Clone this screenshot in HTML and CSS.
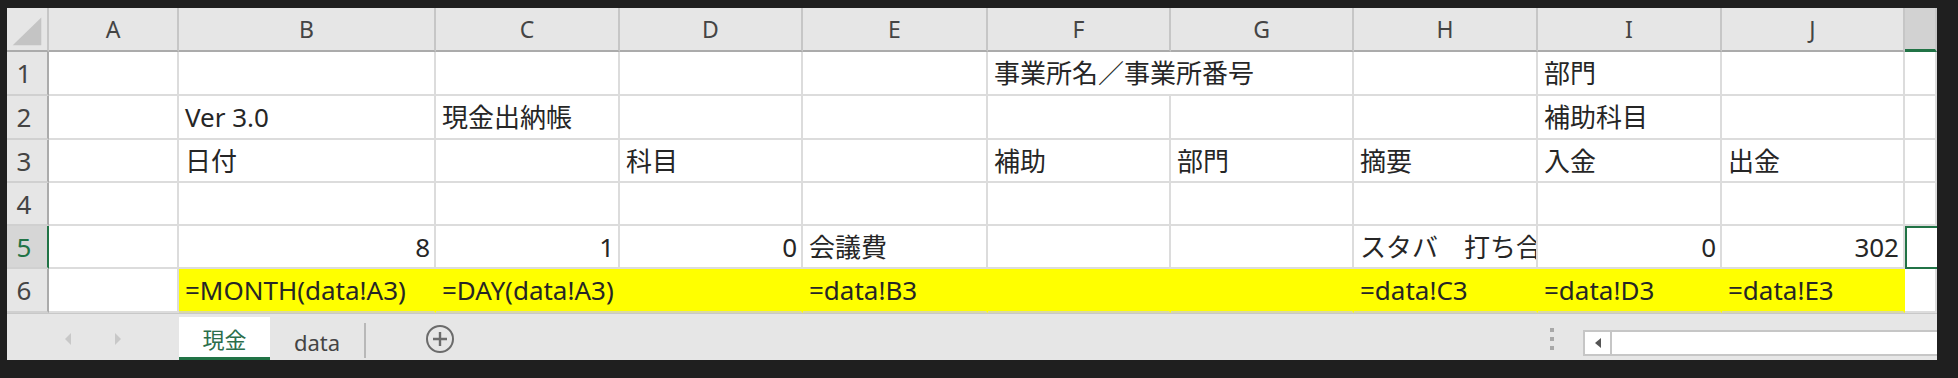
FILE: index.html
```html
<!DOCTYPE html>
<html>
<head>
  <meta charset="utf-8">
  <title>現金出納帳</title>
  <link rel="stylesheet" href="styles.css">
</head>
<body>
  <div class="window">
    <div class="sheet">
      <!-- column headers -->
      <div class="corner">
        <svg width="42" height="44" viewBox="0 0 42 44"><polygon points="6,39 36,39 36,10" fill="#c4c4c4"/></svg>
      </div>
      <div class="col-head">A</div>
      <div class="col-head">B</div>
      <div class="col-head">C</div>
      <div class="col-head">D</div>
      <div class="col-head">E</div>
      <div class="col-head">F</div>
      <div class="col-head">G</div>
      <div class="col-head">H</div>
      <div class="col-head">I</div>
      <div class="col-head">J</div>
      <div class="col-head current"></div>

      <!-- row 1 -->
      <div class="row-head">1</div>
      <div class="cell"></div>
      <div class="cell"></div>
      <div class="cell"></div>
      <div class="cell"></div>
      <div class="cell"></div>
      <div class="cell span2">事業所名／事業所番号</div>
      <div class="cell"></div>
      <div class="cell">部門</div>
      <div class="cell"></div>
      <div class="cell"></div>

      <!-- row 2 -->
      <div class="row-head">2</div>
      <div class="cell"></div>
      <div class="cell">Ver 3.0</div>
      <div class="cell">現金出納帳</div>
      <div class="cell"></div>
      <div class="cell"></div>
      <div class="cell"></div>
      <div class="cell"></div>
      <div class="cell"></div>
      <div class="cell">補助科目</div>
      <div class="cell"></div>
      <div class="cell"></div>

      <!-- row 3 -->
      <div class="row-head">3</div>
      <div class="cell"></div>
      <div class="cell">日付</div>
      <div class="cell"></div>
      <div class="cell">科目</div>
      <div class="cell"></div>
      <div class="cell">補助</div>
      <div class="cell">部門</div>
      <div class="cell">摘要</div>
      <div class="cell">入金</div>
      <div class="cell">出金</div>
      <div class="cell"></div>

      <!-- row 4 -->
      <div class="row-head">4</div>
      <div class="cell"></div>
      <div class="cell"></div>
      <div class="cell"></div>
      <div class="cell"></div>
      <div class="cell"></div>
      <div class="cell"></div>
      <div class="cell"></div>
      <div class="cell"></div>
      <div class="cell"></div>
      <div class="cell"></div>
      <div class="cell"></div>

      <!-- row 5 -->
      <div class="row-head current">5</div>
      <div class="cell"></div>
      <div class="cell num">8</div>
      <div class="cell num">1</div>
      <div class="cell num">0</div>
      <div class="cell">会議費</div>
      <div class="cell"></div>
      <div class="cell"></div>
      <div class="cell clip">スタバ　打ち合わせ</div>
      <div class="cell num">0</div>
      <div class="cell num">302</div>
      <div class="cell active"></div>

      <!-- row 6 -->
      <div class="row-head">6</div>
      <div class="cell"></div>
      <div class="cell fill">=MONTH(data!A3)</div>
      <div class="cell fill span2">=DAY(data!A3)</div>
      <div class="cell fill">=data!B3</div>
      <div class="cell fill"></div>
      <div class="cell fill"></div>
      <div class="cell fill">=data!C3</div>
      <div class="cell fill">=data!D3</div>
      <div class="cell fill">=data!E3</div>
      <div class="cell"></div>
    </div>

    <div class="tabbar">
      <div class="tab-nav">
        <svg width="12" height="16" viewBox="0 0 12 16"><polygon points="9,2 3,8 9,14" fill="#c8c8c8"/></svg>
        <svg width="12" height="16" viewBox="0 0 12 16"><polygon points="3,2 9,8 3,14" fill="#c8c8c8"/></svg>
      </div>
      <div class="tab selected">現金</div>
      <div class="tab">data</div>
      <div class="add-sheet">
        <svg width="30" height="30" viewBox="0 0 30 30">
          <circle cx="15" cy="15" r="13" fill="none" stroke="#6b6b6b" stroke-width="2"/>
          <path d="M15 8v14M8 15h14" stroke="#6b6b6b" stroke-width="2.4"/>
        </svg>
      </div>
      <div class="spacer"></div>
      <div class="grip">
        <span></span><span></span><span></span>
      </div>
      <div class="hscroll">
        <div class="scroll-btn">
          <svg width="10" height="14" viewBox="0 0 10 14"><polygon points="8,2 2,7 8,12" fill="#555"/></svg>
        </div>
        <div class="scroll-track"></div>
      </div>
    </div>
  </div>
</body>
</html>
```

FILE: styles.css
```css
body {
  margin: 0;
  background-color: #1f1f1f;
  font-family: "Noto Sans", "Noto Sans CJK JP", sans-serif;
  overflow: hidden;
}

.window {
  width: 1930px;
  margin: 8px 0 0 7px;
  background-color: #fff;
  overflow: hidden;
}

.sheet {
  display: grid;
  grid-template-columns: 42px 130px 257px 184px 183px 185px 183px 183px 184px 184px 183px 32px;
  grid-template-rows: 44px 44px 44px 43px 43px 43px 44px;
  background-color: #fff;
}

.corner,
.col-head,
.row-head {
  background-color: #e6e6e6;
  color: #444;
  box-sizing: border-box;
  display: flex;
  align-items: center;
  justify-content: center;
}

.corner {
  border-right: 2px solid #c6c6c6;
  border-bottom: 2px solid #ababab;
}

.col-head {
  font-size: 23px;
  border-right: 2px solid #c6c6c6;
  border-bottom: 2px solid #ababab;
}

.col-head.current {
  background-color: #d2d2d2;
  border-bottom: 3px solid #217346;
}

.row-head {
  font-size: 26px;
  padding-right: 6px;
  border-right: 2px solid #ababab;
  border-bottom: 2px solid #d0d0d0;
}

.row-head.current {
  background-color: #d6d6d6;
  color: #217346;
  border-right: 2px solid #217346;
}

.cell {
  box-sizing: border-box;
  border-right: 2px solid #dcdcdc;
  border-bottom: 2px solid #dcdcdc;
  padding: 0 5px 0 6px;
  font-size: 26px;
  line-height: 42px;
  color: #262626;
  white-space: nowrap;
}

.span2 {
  grid-column: span 2;
}

.num {
  text-align: right;
  padding-right: 4px;
}

.clip {
  overflow: hidden;
  padding-right: 0;
}

.fill {
  background-color: #ffff00;
  border-right-color: #ffff00;
  border-bottom-color: #d8d8a8;
}

.active {
  border-left: 2px solid #217346;
  border-top: 2px solid #217346;
  border-bottom: 2px solid #217346;
  border-right: none;
}

.tabbar {
  display: flex;
  align-items: stretch;
  height: 47px;
  box-sizing: border-box;
  padding-top: 3px;
  background-color: #e6e6e6;
  border-top: 1px solid #c8c8c8;
}

.tab-nav {
  width: 172px;
  display: flex;
  align-items: center;
  justify-content: center;
  gap: 38px;
}

.tab {
  width: 96px;
  display: flex;
  align-items: center;
  justify-content: center;
  font-size: 22px;
  color: #444;
  box-sizing: border-box;
  padding-top: 2px;
}

.tab.selected {
  width: 91px;
  background-color: #fff;
  color: #2b6e4b;
  border-bottom: 3px solid #217346;
}

.tab:not(.selected) {
  border-right: 2px solid #b8b8b8;
  margin: 6px 0 2px;
}

.add-sheet {
  width: 148px;
  display: flex;
  align-items: center;
  justify-content: center;
}

.spacer {
  flex: 1;
}

.grip {
  width: 30px;
  display: flex;
  flex-direction: column;
  align-items: center;
  justify-content: center;
  gap: 5px;
  margin-right: 16px;
}

.grip span {
  width: 4px;
  height: 4px;
  background-color: #a8a8a8;
}

.hscroll {
  width: 354px;
  height: 26px;
  margin-top: 13px;
  box-sizing: border-box;
  border: 2px solid #c6c6c6;
  border-right: none;
  background-color: #fff;
  display: flex;
}

.scroll-btn {
  width: 25px;
  border-right: 2px solid #c6c6c6;
  display: flex;
  align-items: center;
  justify-content: center;
}

.scroll-track {
  flex: 1;
}
```
